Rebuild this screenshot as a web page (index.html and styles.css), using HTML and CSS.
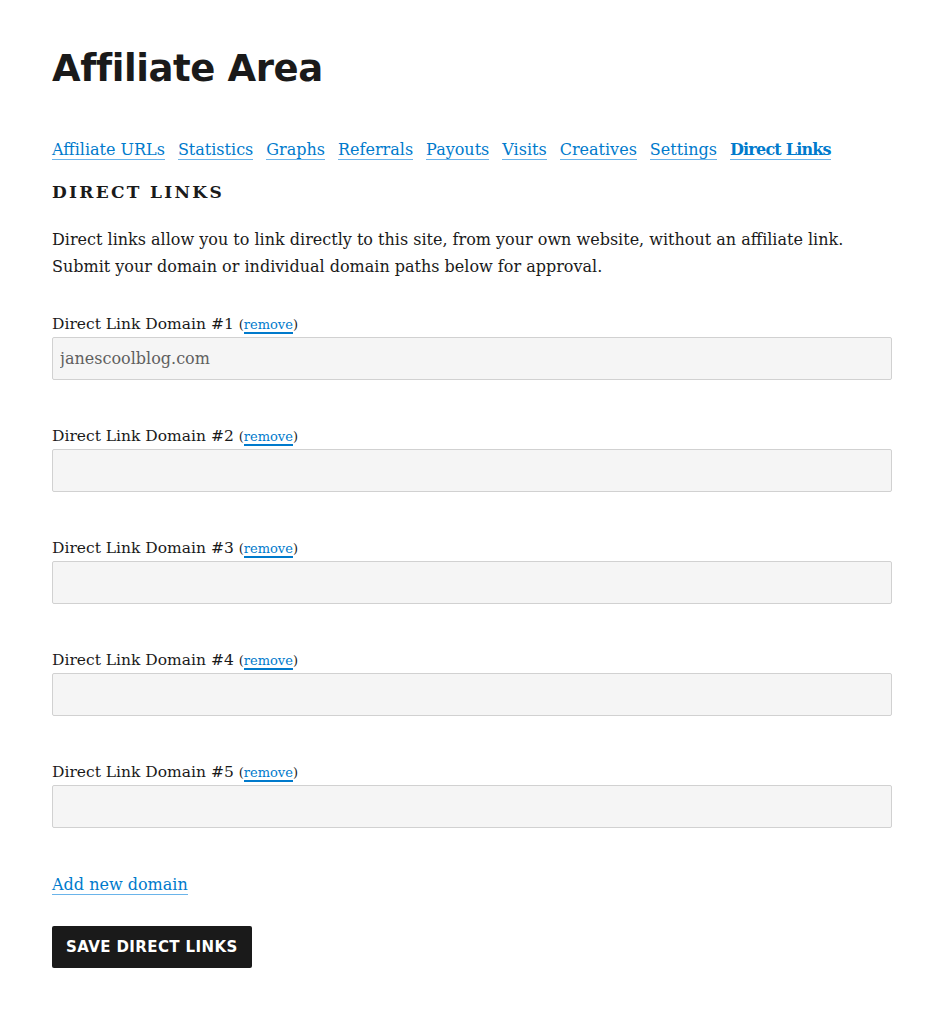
FILE: index.html
```html
<!DOCTYPE html>
<html>
<head>
	<meta charset="utf-8">
	<title>Affiliate Area</title>
	<link rel="stylesheet" href="styles.css">
</head>
<body>
	<div class="page">
		<h1 class="page-title">Affiliate Area</h1>

		<!--选项卡-->
		<ul class="tabs">
			<li><a href="#">Affiliate URLs</a></li>
			<li><a href="#">Statistics</a></li>
			<li><a href="#">Graphs</a></li>
			<li><a href="#">Referrals</a></li>
			<li><a href="#">Payouts</a></li>
			<li><a href="#">Visits</a></li>
			<li><a href="#">Creatives</a></li>
			<li><a href="#">Settings</a></li>
			<li class="active"><a href="#">Direct Links</a></li>
		</ul>

		<h4 class="section-title">Direct Links</h4>
		<p class="intro">Direct links allow you to link directly to this site, from your own website, without an affiliate link. Submit your domain or individual domain paths below for approval.</p>

		<form class="domains">
			<div class="field">
				<label>Direct Link Domain #1 <span class="remove">(<a href="#">remove</a>)</span></label>
				<input type="text" value="janescoolblog.com">
			</div>
			<div class="field">
				<label>Direct Link Domain #2 <span class="remove">(<a href="#">remove</a>)</span></label>
				<input type="text">
			</div>
			<div class="field">
				<label>Direct Link Domain #3 <span class="remove">(<a href="#">remove</a>)</span></label>
				<input type="text">
			</div>
			<div class="field">
				<label>Direct Link Domain #4 <span class="remove">(<a href="#">remove</a>)</span></label>
				<input type="text">
			</div>
			<div class="field">
				<label>Direct Link Domain #5 <span class="remove">(<a href="#">remove</a>)</span></label>
				<input type="text">
			</div>

			<p class="add"><a href="#">Add new domain</a></p>
			<button type="button" class="save">Save Direct Links</button>
		</form>
	</div>
</body>
</html>
```

FILE: styles.css
```css
* {
	margin: 0;
	padding: 0;
	box-sizing: border-box;
}

body {
	background: #fff;
	color: #1a1a1a;
	font-family: "DejaVu Serif", "Liberation Serif", serif;
	font-size: 16px;
}

a {
	color: #007acc;
	text-decoration: none;
	border-bottom: 1px solid #6ab4ea;
}

.page {
	padding: 44px 50px 40px 52px;
}

.page-title {
	font-family: "DejaVu Sans", "Open Sans", sans-serif;
	font-weight: bold;
	font-size: 37px;
	line-height: 50px;
	letter-spacing: -0.4px;
}

.tabs {
	list-style: none;
	display: flex;
	gap: 13px;
	margin-top: 43px;
	font-size: 16px;
	line-height: 26px;
}

.tabs .active a {
	font-weight: bold;
	letter-spacing: -0.8px;
}

.section-title {
	margin-top: 16px;
	font-size: 17px;
	line-height: 26px;
	font-weight: bold;
	letter-spacing: 2.3px;
	text-transform: uppercase;
}

.intro {
	margin-top: 21px;
	font-size: 16px;
	line-height: 27px;
}

.domains {
	margin-top: 32px;
}

.field {
	margin-bottom: 44px;
}

.field label {
	display: block;
	font-size: 15.5px;
	line-height: 24px;
}

.remove {
	font-size: 13px;
}

.remove a {
	border-bottom: 2px solid #007acc;
}

.field input {
	display: block;
	width: 100%;
	height: 43px;
	padding: 0 7px;
	background: #f5f5f5;
	border: 1px solid #d1d1d1;
	border-radius: 2px;
	color: #5f5f5f;
	font-family: inherit;
	font-size: 16px;
}

.add {
	margin-top: 0;
	font-size: 16px;
	line-height: 26px;
}

.save {
	margin-top: 28px;
	height: 42px;
	padding: 0 14px;
	background: #1a1a1a;
	border: none;
	border-radius: 2px;
	color: #fff;
	font-family: "DejaVu Sans", sans-serif;
	font-weight: bold;
	font-size: 15px;
	letter-spacing: 0.4px;
	text-transform: uppercase;
}
```
